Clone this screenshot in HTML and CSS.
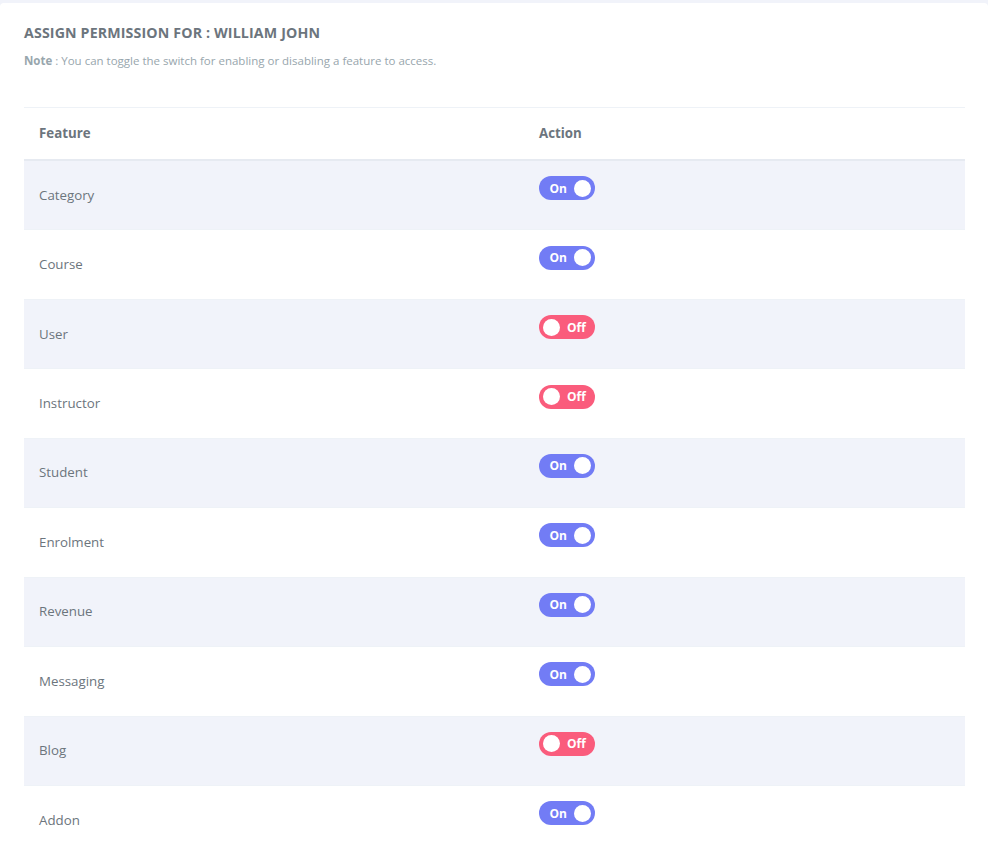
FILE: index.html
```html
<!DOCTYPE html>
<html lang="en">
<head>
<meta charset="utf-8">
<title>Assign Permission</title>
<link rel="stylesheet" href="styles.css">
</head>
<body>
<div class="card">
  <h4 class="header-title">Assign permission for : William John</h4>
  <p class="note"><b>Note</b> : You can toggle the switch for enabling or disabling a feature to access.</p>
  <table class="perm-table">
    <thead>
      <tr><th class="col-feature">Feature</th><th>Action</th></tr>
    </thead>
    <tbody>
      <tr><td>Category</td><td><span class="switch on"><span class="lbl">On</span><span class="knob"></span></span></td></tr>
      <tr><td>Course</td><td><span class="switch on"><span class="lbl">On</span><span class="knob"></span></span></td></tr>
      <tr><td>User</td><td><span class="switch off"><span class="knob"></span><span class="lbl">Off</span></span></td></tr>
      <tr><td>Instructor</td><td><span class="switch off"><span class="knob"></span><span class="lbl">Off</span></span></td></tr>
      <tr><td>Student</td><td><span class="switch on"><span class="lbl">On</span><span class="knob"></span></span></td></tr>
      <tr><td>Enrolment</td><td><span class="switch on"><span class="lbl">On</span><span class="knob"></span></span></td></tr>
      <tr><td>Revenue</td><td><span class="switch on"><span class="lbl">On</span><span class="knob"></span></span></td></tr>
      <tr><td>Messaging</td><td><span class="switch on"><span class="lbl">On</span><span class="knob"></span></span></td></tr>
      <tr><td>Blog</td><td><span class="switch off"><span class="knob"></span><span class="lbl">Off</span></span></td></tr>
      <tr><td>Addon</td><td><span class="switch on"><span class="lbl">On</span><span class="knob"></span></span></td></tr>
    </tbody>
  </table>
</div>
</body>
</html>
```

FILE: styles.css
```css
html, body {
  margin: 0;
  padding: 0;
}
body {
  background: #f1f3fa;
  font-family: "Open Sans", "Noto Sans", sans-serif;
  color: #6c757d;
  padding-top: 3px;
}
.card {
  background: #fff;
  border-radius: 4px 4px 0 0;
  padding: 20px 23px 0 24px;
  min-height: 850px;
  box-sizing: border-box;
}
.header-title {
  margin: 0;
  font-size: 14.2px;
  line-height: 20px;
  font-weight: 700;
  text-transform: uppercase;
  letter-spacing: 0.01em;
  color: #6c757d;
}
.note {
  margin: 10px 0 0;
  font-size: 11.5px;
  line-height: 16px;
  color: #98a6ad;
}
.note b {
  font-weight: 700;
}
.perm-table {
  margin-top: 38px;
  width: 100%;
  border-collapse: collapse;
  font-size: 13.3px;
}
.perm-table th,
.perm-table td {
  text-align: left;
  padding: 15px;
  vertical-align: middle;
  line-height: 21px;
}
.perm-table th {
  font-weight: 700;
  border-top: 1px solid #eef2f7;
  border-bottom: 2px solid #e6eaf1;
  height: 21px;
}
.perm-table .col-feature {
  width: 470px;
}
.perm-table td {
  border-top: 1px solid #eef2f7;
  height: 38.45px;
}
.perm-table tbody tr:nth-child(odd) td {
  background: #f1f3fa;
}
.switch {
  display: flex;
  align-items: center;
  box-sizing: border-box;
  width: 56px;
  height: 24px;
  border-radius: 12px;
  padding: 0 4px;
  margin-bottom: 14px;
  color: #fff;
  font-size: 12px;
  font-weight: 700;
}
.switch.on {
  background: #727cf5;
  justify-content: flex-end;
  gap: 7px;
}
.switch.off {
  background: #fa5c7c;
  gap: 7px;
}
.knob {
  width: 17px;
  height: 17px;
  border-radius: 50%;
  background: #fff;
  flex: none;
}
```
